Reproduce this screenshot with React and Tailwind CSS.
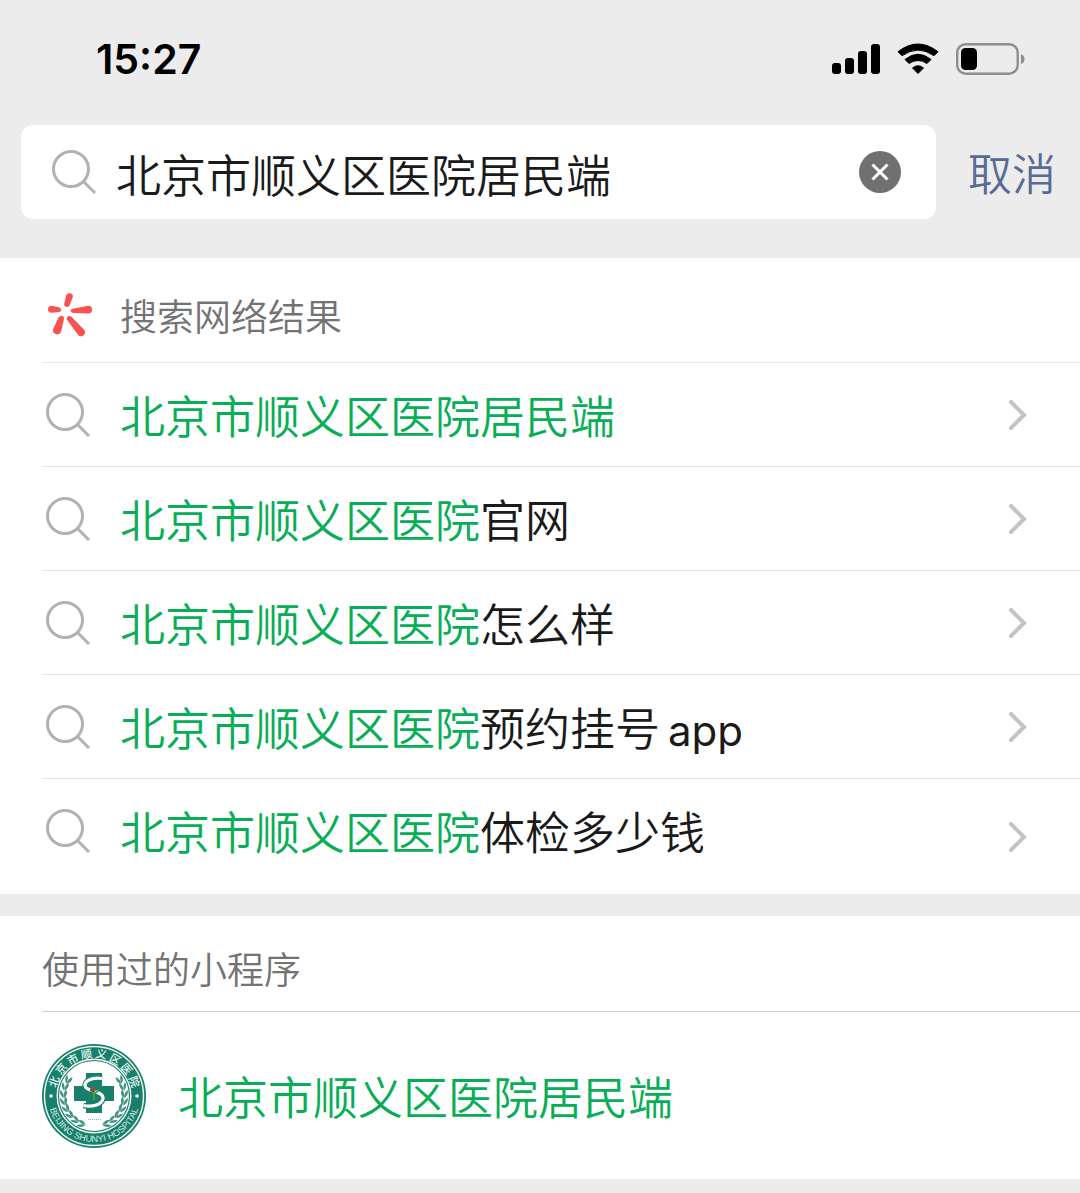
import { useState } from "react";

const KEYWORD = "北京市顺义区医院";

const suggestions = [
  { match: "北京市顺义区医院居民端" },
  { match: KEYWORD, rest: "官网" },
  { match: KEYWORD, rest: "怎么样" },
  { match: KEYWORD, rest: "预约挂号", latin: "app" },
  { match: KEYWORD, rest: "体检多少钱" },
];

function SearchIcon() {
  return (
    <svg className="h-11 w-11 shrink-0" viewBox="0 0 44 44" fill="none" stroke="#b2b2b2" strokeWidth="3" aria-hidden="true">
      <circle cx="19" cy="19" r="17.500" />
      <path d="M31 31L43 43" />
    </svg>
  );
}

function ChevronIcon() {
  return (
    <svg className="h-8 w-5 shrink-0" viewBox="0 0 20 32" fill="none" stroke="#c3c3c3" strokeWidth="4" strokeLinecap="round" aria-hidden="true">
      <path d="M3 3L16 16L3 29" />
    </svg>
  );
}

function SparkIcon() {
  return (
    <svg className="h-11 w-11 shrink-0" viewBox="0 0 44 44" fill="#fa5151" aria-hidden="true">
      <path d="M18 3Q18.500 0 22 .2Q25.500 1 24.800 4L21.500 12.500Q20.500 14.300 18.200 13.800Q15.800 13.200 16.200 11Z" />
      <path d="M3.500 12.800L11 14.300Q13.200 15.200 13.200 17Q13 18.800 11 19L3.500 19.700Q.2 19.700 0 16.500Q.2 12.800 3.500 12.800Z" />
      <path d="M24.500 15.800L40.500 12.800Q44 12.800 44 16.500Q44 20.400 40.500 20.500L25 20Q23 19.700 22.600 18Q22.800 16.200 24.500 15.800Z" />
      <path d="M10.500 24.500Q12 22.200 14.200 22.800Q16.500 23.500 16 26L13.200 38.500Q12 41.800 8.500 41.300Q4 40 5 36.500Z" />
      <path d="M19.300 24Q21 22 23.500 23.800L36.300 37Q38.200 40 35.500 42.500Q32.200 44.500 30 41.800L19.300 27.200Q18 25.200 19.300 24Z" />
    </svg>
  );
}

function StatusIcons() {
  return (
    <div className="flex items-center gap-4">
      <svg className="h-8 w-12" viewBox="0 0 48 32" aria-hidden="true">
        <rect x="0" y="20" width="9" height="11" rx="3" />
        <rect x="13" y="15" width="9" height="16" rx="3" />
        <rect x="26" y="8" width="9" height="23" rx="3" />
        <rect x="39" y="1" width="9" height="30" rx="3" />
      </svg>
      <svg className="h-8 w-11" viewBox="0 0 44 32" aria-hidden="true">
        <path d="M2 8.700Q22 -6.700 42 8.700L38 12.700Q22 1.500 6 12.700Z" stroke="#000" strokeWidth="1" strokeLinejoin="round" />
        <path d="M9 16.500Q22 6 35 16.500L31 20.500Q22 14.500 13 20.500Z" stroke="#000" strokeWidth="1" strokeLinejoin="round" />
        <path d="M16.500 25Q22 20.500 27.500 25L22 30.500Z" stroke="#000" strokeWidth="1" strokeLinejoin="round" />
      </svg>
      <svg className="h-8 w-[70px]" viewBox="0 0 70 32" aria-hidden="true">
        <rect x="1.200" y="1.200" width="60.500" height="29.500" rx="8.500" fill="none" stroke="#8e8e8e" strokeWidth="2.400" />
        <rect x="5" y="5" width="16" height="22" rx="4.500" />
        <path d="M65 11Q68.500 12.500 68.500 16Q68.500 19.500 65 21Z" fill="#8e8e8e" />
      </svg>
    </div>
  );
}

const leaves = [0, 1, 2, 3, 4, 5, 6, 7];

function HospitalLogo() {
  return (
    <svg className="h-[104px] w-[104px] shrink-0" viewBox="0 0 104 104" role="img" aria-label="北京市顺义区医院">
      <defs>
        <path id="arc-top" d="M13.500 52A38.500 38.500 0 0 1 90.500 52" />
        <path id="arc-bottom" d="M6 52A46 46 0 0 0 98 52" />
        <g id="laurel">
          {leaves.map((i) => (
            <g key={i} transform={`rotate(${16 + i * 14} 52 52)`}>
              <path d="M52 82Q48 77 43.500 79.500Q47.500 83 52 82Z" />
              <path d="M52 82.500Q48 87 43.500 85Q47.500 81.500 52 82.500Z" />
            </g>
          ))}
        </g>
      </defs>
      <circle cx="52" cy="52" r="52" fill="#16806a" />
      <circle cx="52" cy="52" r="49.500" fill="none" stroke="#e8f4f0" strokeWidth="1.500" />
      <circle cx="52" cy="52" r="37.500" fill="#fff" />
      <circle cx="52" cy="52" r="35.500" fill="none" stroke="#16806a" strokeWidth="1.200" />
      <g fill="#3d9582">
        <use href="#laurel" />
        <use href="#laurel" transform="matrix(-1 0 0 1 104 0)" />
      </g>
      <path d="M44 29H60V42H72V57H60V69H44V57H32V42H44Z" fill="#16806a" />
      <path d="M60 34.500C49 32.500 41 38 43.500 43C46 47.500 62 47.500 61 54.500C60 60.500 51 63.500 41.500 61.500" fill="none" stroke="#16806a" strokeWidth="5.500" />
      <path d="M60 34.500C49 32.500 41 38 43.500 43C46 47.500 62 47.500 61 54.500C60 60.500 51 63.500 41.500 61.500" fill="none" stroke="#fff" strokeWidth="3.200" />
      <path d="M52 56V49L48 46M52 50L56 47" fill="none" stroke="#4b9b4d" strokeWidth="2" />
      <circle cx="51" cy="45.500" r="2.800" fill="#7a5b4a" />
      <path d="M46 75.500H60" stroke="#8fb8ac" strokeWidth="1" strokeDasharray="1 1" />
      <circle cx="9" cy="52" r="1.800" fill="#fff" />
      <circle cx="95" cy="52" r="1.800" fill="#fff" />
      <text fill="#eaf5f2" fontSize="11" fontWeight="500" textAnchor="middle">
        <textPath href="#arc-top" startOffset="50%">北 京 市 顺 义 区 医 院</textPath>
      </text>
      <text fill="#d5eae4" fontSize="9" className="font-['Liberation_Sans',sans-serif]" textAnchor="middle">
        <textPath href="#arc-bottom" startOffset="50%">BEIJING SHUNYI HOSPITAL</textPath>
      </text>
    </svg>
  );
}

export default function App() {
  const [query, setQuery] = useState("北京市顺义区医院居民端");

  return (
    <div className="min-h-screen bg-[#ececec] font-['Noto_Sans_CJK_SC',sans-serif] font-[350] text-[#1a1a1a]">
      <div className="flex items-center justify-between pt-[31px] pr-[54px] pb-[38px] pl-24 text-black">
        <time className="font-['Inter',sans-serif] text-[41px] leading-[56px] font-semibold">15:27</time>
        <StatusIcons />
      </div>

      <form className="flex items-center gap-8 pr-6 pb-[39px] pl-[21px]" role="search" onSubmit={(e) => e.preventDefault()}>
        <div className="flex h-[94px] min-w-0 flex-1 items-center rounded-xl bg-white pr-[35px] pl-[31px]">
          <SearchIcon />
          <input
            type="text"
            aria-label="搜索"
            className="mt-1 ml-5 h-16 min-w-0 flex-1 bg-transparent text-[45px] leading-[64px] outline-none"
            value={query}
            onChange={(e) => setQuery(e.target.value)}
          />
          <button type="button" aria-label="清除" onClick={() => setQuery("")}>
            <svg className="h-[42px] w-[42px]" viewBox="0 0 42 42" aria-hidden="true">
              <circle cx="21" cy="21" r="21" fill="#707070" />
              <path d="M13.500 13.500L28.500 28.500M28.500 13.500L13.500 28.500" stroke="#fff" strokeWidth="3" />
            </svg>
          </button>
        </div>
        <button type="button" className="shrink-0 text-[44px] leading-[64px] text-[#576b95]">取消</button>
      </form>

      <main>
        <section className="bg-white">
          <a href="#web" className="ml-[42px] flex h-[105px] items-center border-b border-[#e8e8e8] pt-2.5 pl-1.5 text-[#737373]">
            <SparkIcon />
            <span className="ml-7 text-[37px] leading-[56px]">搜索网络结果</span>
          </a>
          <ul>
            {suggestions.map((item, i) => (
              <li key={i} className="group ml-[42px] border-b border-[#e5e5e5] last:border-b-0">
                <a href="#result" className="flex h-[103px] items-start pr-[52px] pl-1 group-last:h-[115px]">
                  <span className="flex h-[103px] flex-1 items-center">
                    <SearchIcon />
                    <span className="ml-[30px] text-[45px] leading-[64px]">
                      <span className="text-[#07ae56]">{item.match}</span>
                      {item.rest}
                      {item.latin && (
                        <span className="ml-2 font-['Inter',sans-serif] text-[42px] leading-none font-normal">{item.latin}</span>
                      )}
                    </span>
                  </span>
                  <span className="self-center">
                    <ChevronIcon />
                  </span>
                </a>
              </li>
            ))}
          </ul>
        </section>

        <section className="mt-[22px] bg-white">
          <h2 className="ml-[42px] flex h-24 items-center border-b border-[#d0d0d0] pt-2 text-[37px] leading-[56px] font-[350] text-[#737373]">
            使用过的小程序
          </h2>
          <a href="#miniapp" className="flex h-[167px] items-center px-[42px]">
            <HospitalLogo />
            <span className="ml-8 text-[45px] leading-[64px] text-[#07ae56]">北京市顺义区医院居民端</span>
          </a>
        </section>
      </main>
    </div>
  );
}
